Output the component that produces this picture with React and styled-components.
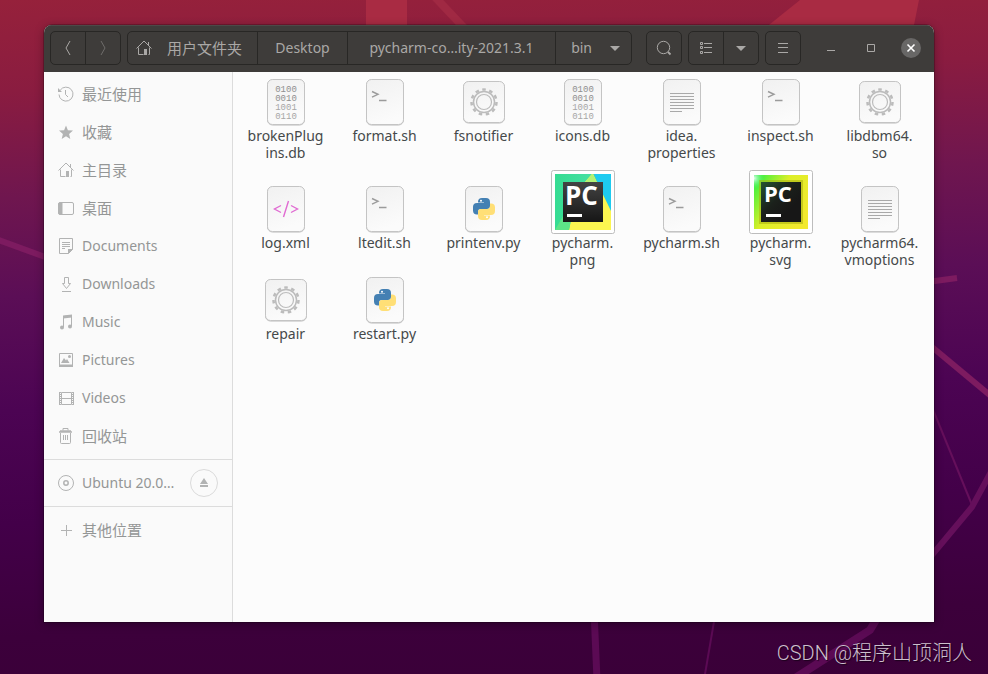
import React from "react";
import styled, { createGlobalStyle } from "styled-components";

const GlobalStyle = createGlobalStyle`
  * {
    box-sizing: border-box;
  }
  body {
    margin: 0;
    background: #3b003a;
    font-family: "Noto Sans", "Noto Sans CJK SC", sans-serif;
    font-size: 14px;
  }
  button {
    font: inherit;
    color: inherit;
    background: none;
    border: none;
    padding: 0;
  }
  a {
    color: inherit;
    text-decoration: none;
  }
  svg {
    display: block;
    flex: none;
  }
`;

const Desktop = styled.div`
  position: relative;
  display: flex;
  min-height: 100vh;
  padding: 25px 54px 52px 44px;
  overflow: hidden;
  background: linear-gradient(
    178deg,
    #96213b 0%,
    #8a1c40 13%,
    #6f164f 28%,
    #5b0e56 42%,
    #4c0453 58%,
    #430049 74%,
    #3c003b 90%,
    #3a0038 100%
  );
`;

const Wallpaper = styled.svg`
  position: absolute;
  inset: 0;
  width: 100%;
  height: 100%;
`;

const Watermark = styled.div`
  position: absolute;
  right: 16px;
  bottom: 6px;
  font-family: Roboto, "Noto Sans CJK SC", sans-serif;
  font-size: 20px;
  line-height: 30px;
  font-weight: 300;
  color: #cdbfcd;
  text-shadow: 1px 1px 1px #1c001c;
`;

const Window = styled.main`
  position: relative;
  display: flex;
  flex-direction: column;
  flex: 1;
  min-width: 0;
  border-radius: 8px 8px 0 0;
  overflow: hidden;
  background: #fcfcfc;
  box-shadow: 0 0 0 1px rgba(0, 0, 0, 0.2), 0 2px 10px rgba(0, 0, 0, 0.35);
`;

const HeaderBar = styled.header`
  display: flex;
  align-items: center;
  height: 47px;
  padding: 0 13px 1px 6px;
  background: #3e3c3a;
  box-shadow: inset 0 1px 0 #4c4a48;
  color: #aaa8a6;
`;

const ButtonGroup = styled.div`
  display: flex;
  height: 34px;
  margin-right: 6px;
  border: 1px solid #282725;
  border-radius: 5px;
`;

const HeaderButton = styled.button`
  display: flex;
  align-items: center;
  justify-content: center;
  width: 34px;
  opacity: ${(props) => (props.disabled ? 0.45 : 1)};
`;

const Divider = styled.span`
  width: 1px;
  background: #282725;
`;

const PathBar = styled.nav`
  display: flex;
  height: 34px;
  margin-right: 14px;
  border: 1px solid #282725;
  border-radius: 5px;
`;

const PathButton = styled.button`
  display: flex;
  align-items: center;
  justify-content: ${(props) => props.$align || "center"};
  gap: 15px;
  min-width: ${(props) => props.$width}px;
  padding: 0 8px;
  white-space: nowrap;
  font-size: ${(props) => (props.$cjk ? 15 : 14)}px;
  line-height: 22px;

  & + & {
    border-left: 1px solid #282725;
  }
`;

const WindowControls = styled.div`
  display: flex;
  gap: 20px;
  margin-left: auto;
`;

const ControlButton = styled.button`
  display: flex;
  align-items: center;
  justify-content: center;
  width: 20px;
  height: 20px;
  border-radius: 50%;
  background: ${(props) => (props.$filled ? "#686766" : "none")};
`;

const Body = styled.div`
  display: flex;
  flex: 1;
`;

const Sidebar = styled.aside`
  width: 189px;
  flex: none;
  background: #fafafa;
  border-right: 1px solid #dcdcdc;
  color: #949696;
`;

const SidebarSection = styled.div`
  padding: 4px 0;

  &:first-child {
    padding-top: 3px;
  }

  & + & {
    border-top: 1px solid #dcdcdc;
  }
`;

const SidebarRow = styled.div`
  display: flex;
  align-items: center;
  height: 38px;
  padding: 0 14px;
`;

const SidebarLink = styled.a`
  display: flex;
  align-items: center;
  gap: 8px;
  flex: 1;
  min-width: 0;
  font-size: ${(props) => (props.$cjk ? 15 : 14)}px;
  line-height: 22px;

  > svg {
    color: #b2b3b3;
  }
`;

const EjectButton = styled.button`
  display: flex;
  align-items: center;
  justify-content: center;
  width: 28px;
  height: 28px;
  border: 1px solid #dadada;
  border-radius: 50%;
  color: #b2b3b3;
`;

const FileGrid = styled.section`
  display: grid;
  grid-template-columns: repeat(auto-fill, minmax(96px, 1fr));
  align-content: start;
  flex: 1;
  padding: 7px 5px 7px 3px;
  color: #45494a;
`;

const FileItem = styled.button`
  display: grid;
  grid-row: span 2;
  grid-template-rows: subgrid;
  justify-items: center;
  align-items: end;
`;

const FileName = styled.span`
  align-self: start;
  padding-bottom: 9px;
  line-height: 17px;
  text-align: center;
  white-space: pre-line;
`;

const Icon = ({ children, size = 16 }) => (
  <svg
    width={size}
    height={size}
    viewBox="0 0 16 16"
    fill="none"
    stroke="currentColor"
    aria-hidden="true"
  >
    {children}
  </svg>
);

const HomeIcon = () => (
  <Icon>
    <path d="M.5 8.5 8 1l7.5 7.5M2.5 7.5v7h5M13.5 7.5v7h-1M12.5 2v3" />
    <path d="M8 9h3v6H8z" fill="currentColor" stroke="none" />
  </Icon>
);

const ArrowIcon = () => (
  <Icon>
    <path d="M3 6h10L8 11z" fill="currentColor" stroke="none" />
  </Icon>
);

const sidebarIcons = {
  recent: (
    <>
      <path d="M2.2 4.2A7 7 0 1 1 1 8.5M7.5 4v4.5L10 11" />
      <path d="M0 2v4h4z" fill="currentColor" stroke="none" />
    </>
  ),
  star: (
    <path
      d="m8 1.5 1.9 4.7 5.1.4-3.9 3.3 1.2 5L8 12.2l-4.3 2.7 1.2-5L1 6.6l5.1-.4z"
      fill="currentColor"
      stroke="none"
    />
  ),
  desktop: (
    <>
      <rect x=".5" y="2.5" width="15" height="12" rx="1.5" />
      <path d="M1 3h3v11H1z" fill="currentColor" />
    </>
  ),
  documents: (
    <>
      <path d="M1.5.5h13v11l-4 4h-9zM4 4.5h8M4 6.5h8M4 8.5h8M4 10.5h3" />
      <path d="M10 11h5l-5 5z" fill="currentColor" stroke="none" />
    </>
  ),
  downloads: <path d="M6.5 1.5h4v6h2l-4 5-4-5h2zM4 15.5h9" />,
  music: (
    <>
      <path d="M5.5 13V2.5l8-1V12" />
      <path d="M5 1.500l9-1v3l-9 1z" fill="currentColor" stroke="none" />
      <circle cx="4" cy="13.500" r="2" fill="currentColor" stroke="none" />
      <circle cx="12" cy="12.500" r="2" fill="currentColor" stroke="none" />
    </>
  ),
  pictures: (
    <>
      <path d="M1.5 1.5h13v13h-13z" />
      <path
        d="M1 12.5h14V15H1zM3 11l3-5 2 2.5 1-1.5 2.5 4z"
        fill="currentColor"
        stroke="none"
      />
      <circle cx="11.5" cy="4.5" r="1.5" fill="currentColor" stroke="none" />
    </>
  ),
  videos: (
    <>
      <path d="M3.5 2.5h10v12h-10zM3.5 8.5h10" />
      <path d="M1.5 2v13M15.5 2v13" />
      <path d="M2.5 2v13M14.5 2v13" strokeDasharray="1 1" />
    </>
  ),
  trash: (
    <>
      <path d="M2.5 5v9.5a1 1 0 0 0 1 1h8a1 1 0 0 0 1-1V5M5.5 7v5M7.5 7v5M9.5 7v5M5 2.5v-2h5v2" />
      <path d="M1 4h13M2 3h11" strokeWidth="1.5" />
    </>
  ),
  disk: (
    <>
      <circle cx="8" cy="8" r="7.5" />
      <circle cx="8" cy="8" r="2.2" strokeWidth="1.5" />
    </>
  ),
  plus: <path d="M8.5 3v11M3 8.5h11" />,
};

const Paper = ({ children, square }) => (
  <svg width={square ? 42 : 38} height="48" aria-hidden="true">
    <defs>
      <linearGradient id="paper" x1="0" y1="0" x2="0.3" y2="1">
        <stop offset="0" stopColor="#f1f1f1" />
        <stop offset="1" stopColor="#fbfbfb" />
      </linearGradient>
    </defs>
    <rect
      x="0.5"
      y={square ? 3 : 1}
      width={square ? 41 : 37}
      height={square ? 41 : 45}
      rx="5"
      fill="none"
      stroke="#b9b9b9"
    />
    <rect
      x="0.5"
      y={square ? 2.5 : 0.5}
      width={square ? 41 : 37}
      height={square ? 41 : 45}
      rx="5"
      fill="url(#paper)"
      stroke="#c4c4c4"
    />
    {children}
  </svg>
);

const BinaryIcon = () => (
  <Paper>
    <text
      fill="#8f8f8f"
      fontFamily="Liberation Mono, monospace"
      fontSize="9"
      textAnchor="middle"
    >
      <tspan x="19" y="13">0100</tspan>
      <tspan x="19" y="22">0010</tspan>
      <tspan x="19" y="31" fill="#a6a6a6">1001</tspan>
      <tspan x="19" y="40" fill="#a6a6a6">0110</tspan>
    </text>
  </Paper>
);

const ShellIcon = () => (
  <Paper>
    <path
      d="M6 12.5l6 2.8-6 2.8M13 21.5h7.5"
      fill="none"
      stroke="#9b9b9b"
      strokeWidth="1.4"
    />
  </Paper>
);

const TextIcon = () => (
  <Paper>
    <path
      d="M7 14.5h24M7 17.5h24M7 20.5h24M7 23.5h24M7 26.5h24M7 29.5h24M7 32.5h12"
      stroke="#a9a9a9"
    />
  </Paper>
);

const XmlIcon = () => (
  <Paper>
    <path
      d="M14 19.5 7.5 23l6.5 3.5M24 19.5l6.5 3.5-6.5 3.5M21.5 15l-5 16"
      fill="none"
      stroke="#e06bd2"
      strokeWidth="1.4"
    />
  </Paper>
);

const GearIcon = () => (
  <Paper square>
    <g fill="none" stroke="#bcbcbc">
      <circle cx="21" cy="23" r="7.5" strokeWidth="1.2" />
      <circle cx="21" cy="23" r="10.5" strokeWidth="1.5" />
      <circle
        cx="21"
        cy="23"
        r="12.5"
        strokeWidth="2.5"
        pathLength="22"
        strokeDasharray="1 1"
        transform="rotate(-98 21 23)"
      />
    </g>
  </Paper>
);

const snake =
  "M9 0h4a4 4 0 0 1 4 4v4a3 3 0 0 1-3 3H8a3 3 0 0 0-3 3v2.5H4a4 4 0 0 1-4-4V9a4 4 0 0 1 4-4h7V4.5H5V4a4 4 0 0 1 4-4z";

const PythonIcon = () => (
  <Paper>
    <g transform="translate(8 12)">
      <path d={snake} fill="#4480b3" />
      <path d={snake} fill="#ffdf76" transform="rotate(180 11 11)" />
      <circle cx="8" cy="2.8" r="1" fill="#fff" />
      <circle cx="14" cy="19.2" r="1" fill="#fff" />
    </g>
  </Paper>
);

const LogoLetters = ({ x, y, size }) => (
  <text
    x={x}
    y={y}
    fill="#fff"
    fontFamily="Open Sans, sans-serif"
    fontSize={size}
    fontWeight="700"
  >
    PC
  </text>
);

const PycharmPngIcon = () => (
  <svg width="64" height="64" aria-hidden="true">
    <defs>
      <linearGradient id="pngGreen" x1="0" y1="0" x2="1" y2="0">
        <stop offset="0" stopColor="#35dc92" />
        <stop offset="0.6" stopColor="#45dfa0" />
        <stop offset="1" stopColor="#20c8e8" />
      </linearGradient>
      <linearGradient id="pngDark" x1="0" y1="0" x2="0" y2="1">
        <stop offset="0" stopColor="#434343" />
        <stop offset="1" stopColor="#161616" />
      </linearGradient>
    </defs>
    <rect x=".5" y=".5" width="63" height="63" rx="2" fill="#fff" stroke="#bdbdbd" />
    <path d="M4 4h56v56H4z" fill="url(#pngGreen)" />
    <path d="M43 4h17v36z" fill="#1ecbf0" />
    <path d="M34 12l7-8h1l18 37v19H18l2-10z" fill="#fcf650" />
    <path d="M34 12l7-8h1l4 9z" fill="#b2f275" />
    <path d="M4 60l8-14 8 4-2 10z" fill="#5de487" />
    <path d="M12 12h40v40H12z" fill="url(#pngDark)" />
    <LogoLetters x="14" y="35" size="26" />
    <path d="M16 44h15v3H16z" fill="#fff" />
  </svg>
);

const PycharmSvgIcon = () => (
  <svg width="64" height="64" aria-hidden="true">
    <defs>
      <linearGradient id="svgFrame" x1="0" y1="0" x2="1" y2="0.6">
        <stop offset="0" stopColor="#20f046" />
        <stop offset="0.25" stopColor="#7df035" />
        <stop offset="0.5" stopColor="#dcef28" />
        <stop offset="1" stopColor="#f2e92d" />
      </linearGradient>
      <linearGradient id="svgDark" x1="0" y1="0" x2="0.7" y2="0.7">
        <stop offset="0" stopColor="#245331" />
        <stop offset="0.6" stopColor="#1b201b" />
        <stop offset="1" stopColor="#171717" />
      </linearGradient>
      <radialGradient id="svgGlow" cx="0" cy="0.06" r="0.22">
        <stop offset="0" stopColor="#e4fff0" />
        <stop offset="1" stopColor="#20f046" stopOpacity="0" />
      </radialGradient>
    </defs>
    <rect x=".5" y=".5" width="63" height="63" rx="2" fill="#fff" stroke="#bdbdbd" />
    <path d="M5 5h54v54H5z" fill="url(#svgFrame)" />
    <path d="M5 5h54v54H5z" fill="url(#svgGlow)" />
    <path
      d="M11 11h42v42H11z"
      fill="none"
      stroke="#a8ad10"
      strokeOpacity="0.55"
      strokeWidth="2"
    />
    <path d="M12 12h40v40H12z" fill="url(#svgDark)" />
    <LogoLetters x="15" y="32" size="22" />
    <path d="M17 44h15v3H17z" fill="#fff" />
  </svg>
);

const places = [
  { name: "最近使用", icon: "recent", cjk: true },
  { name: "收藏", icon: "star", cjk: true },
  { name: "主目录", icon: "home", cjk: true },
  { name: "桌面", icon: "desktop", cjk: true },
  { name: "Documents", icon: "documents" },
  { name: "Downloads", icon: "downloads" },
  { name: "Music", icon: "music" },
  { name: "Pictures", icon: "pictures" },
  { name: "Videos", icon: "videos" },
  { name: "回收站", icon: "trash", cjk: true },
];

const files = [
  { name: "brokenPlug\nins.db", icon: BinaryIcon },
  { name: "format.sh", icon: ShellIcon },
  { name: "fsnotifier", icon: GearIcon },
  { name: "icons.db", icon: BinaryIcon },
  { name: "idea.\nproperties", icon: TextIcon },
  { name: "inspect.sh", icon: ShellIcon },
  { name: "libdbm64.\nso", icon: GearIcon },
  { name: "log.xml", icon: XmlIcon },
  { name: "ltedit.sh", icon: ShellIcon },
  { name: "printenv.py", icon: PythonIcon },
  { name: "pycharm.\npng", icon: PycharmPngIcon },
  { name: "pycharm.sh", icon: ShellIcon },
  { name: "pycharm.\nsvg", icon: PycharmSvgIcon },
  { name: "pycharm64.\nvmoptions", icon: TextIcon },
  { name: "repair", icon: GearIcon },
  { name: "restart.py", icon: PythonIcon },
];

function Place({ name, icon, cjk, children }) {
  return (
    <SidebarRow>
      <SidebarLink href="#" $cjk={cjk}>
        {icon === "home" ? <HomeIcon /> : <Icon>{sidebarIcons[icon]}</Icon>}
        {name}
      </SidebarLink>
      {children}
    </SidebarRow>
  );
}

function Header() {
  return (
    <HeaderBar>
      <ButtonGroup>
        <HeaderButton aria-label="Back">
          <Icon>
            <path d="M10 1 6 8l4 7" />
          </Icon>
        </HeaderButton>
        <Divider />
        <HeaderButton aria-label="Forward" disabled>
          <Icon>
            <path d="m6 1 4 7-4 7" />
          </Icon>
        </HeaderButton>
      </ButtonGroup>
      <PathBar>
        <PathButton $width={129} $align="flex-start" $cjk>
          <HomeIcon />
          用户文件夹
        </PathButton>
        <PathButton $width={90}>Desktop</PathButton>
        <PathButton $width={208}>pycharm-co…ity-2021.3.1</PathButton>
        <PathButton $width={76} $align="flex-end">
          bin
          <ArrowIcon />
        </PathButton>
      </PathBar>
      <ButtonGroup>
        <HeaderButton aria-label="Search">
          <Icon>
            <circle cx="7.5" cy="7.5" r="6.2" />
            <path d="m12 12 2.5 2.5" strokeWidth="1.8" />
          </Icon>
        </HeaderButton>
      </ButtonGroup>
      <ButtonGroup>
        <HeaderButton aria-label="List view">
          <Icon>
            <path d="M6 3.5h8M6 7.5h8M6 12.5h8M2.5 2.5h2v2h-2zM2.5 6.5h2v2h-2zM2.5 11.5h2v2h-2z" />
          </Icon>
        </HeaderButton>
        <Divider />
        <HeaderButton aria-label="View options">
          <ArrowIcon />
        </HeaderButton>
      </ButtonGroup>
      <ButtonGroup>
        <HeaderButton aria-label="Menu">
          <Icon>
            <path d="M3 3.5h10M3 7.5h10M3 12.5h10" />
          </Icon>
        </HeaderButton>
      </ButtonGroup>
      <WindowControls>
        <ControlButton aria-label="Minimize">
          <Icon>
            <path d="M4 10.5h8" />
          </Icon>
        </ControlButton>
        <ControlButton aria-label="Maximize">
          <Icon>
            <path d="M4.5 4.5h7v7h-7z" />
          </Icon>
        </ControlButton>
        <ControlButton aria-label="Close" $filled>
          <Icon>
            <path d="m4.5 4.5 7 7M11.5 4.5l-7 7" stroke="#fff" strokeWidth="1.6" />
          </Icon>
        </ControlButton>
      </WindowControls>
    </HeaderBar>
  );
}

function App() {
  return (
    <Desktop>
      <GlobalStyle />
      <Wallpaper viewBox="0 0 988 674" preserveAspectRatio="xMidYMid slice" aria-hidden="true">
        <path d="M366 0h41v40h-41zM800 0h119l-8 40H750z" fill="#a92b43" />
        <path d="m434-4 34 36" fill="none" stroke="#a02943" strokeWidth="8" />
        <g fill="none" stroke="#7d1b60" strokeWidth="6">
          <path d="m-4 239 60 22" />
          <path d="m920 283 37-5" />
          <path d="m920 337 72 60" />
        </g>
        <g fill="none" stroke="#650f5b">
          <path d="m925 390 47 115" strokeWidth="2" />
          <path d="m992 470-20 37-50 60" strokeWidth="6" />
        </g>
        <g fill="none" stroke="#5b0a54">
          <path d="m594 610 3 70" strokeWidth="7" />
          <path d="m716 610-12 70" strokeWidth="2" />
          <path d="m882 610-12 20-78 50" strokeWidth="8" />
        </g>
      </Wallpaper>
      <Window>
        <Header />
        <Body>
          <Sidebar>
            <SidebarSection>
              {places.map((place) => (
                <Place key={place.name} {...place} />
              ))}
            </SidebarSection>
            <SidebarSection>
              <Place name="Ubuntu 20.0…" icon="disk">
                <EjectButton aria-label="Eject">
                  <Icon>
                    <path d="m8 3 4 6H4zM4 10h8v2H4z" fill="currentColor" stroke="none" />
                  </Icon>
                </EjectButton>
              </Place>
            </SidebarSection>
            <SidebarSection>
              <Place name="其他位置" icon="plus" cjk />
            </SidebarSection>
          </Sidebar>
          <FileGrid>
            {files.map(({ name, icon: FileIcon }) => (
              <FileItem key={name}>
                <FileIcon />
                <FileName>{name}</FileName>
              </FileItem>
            ))}
          </FileGrid>
        </Body>
      </Window>
      <Watermark>CSDN @程序山顶洞人</Watermark>
    </Desktop>
  );
}

export default App;
